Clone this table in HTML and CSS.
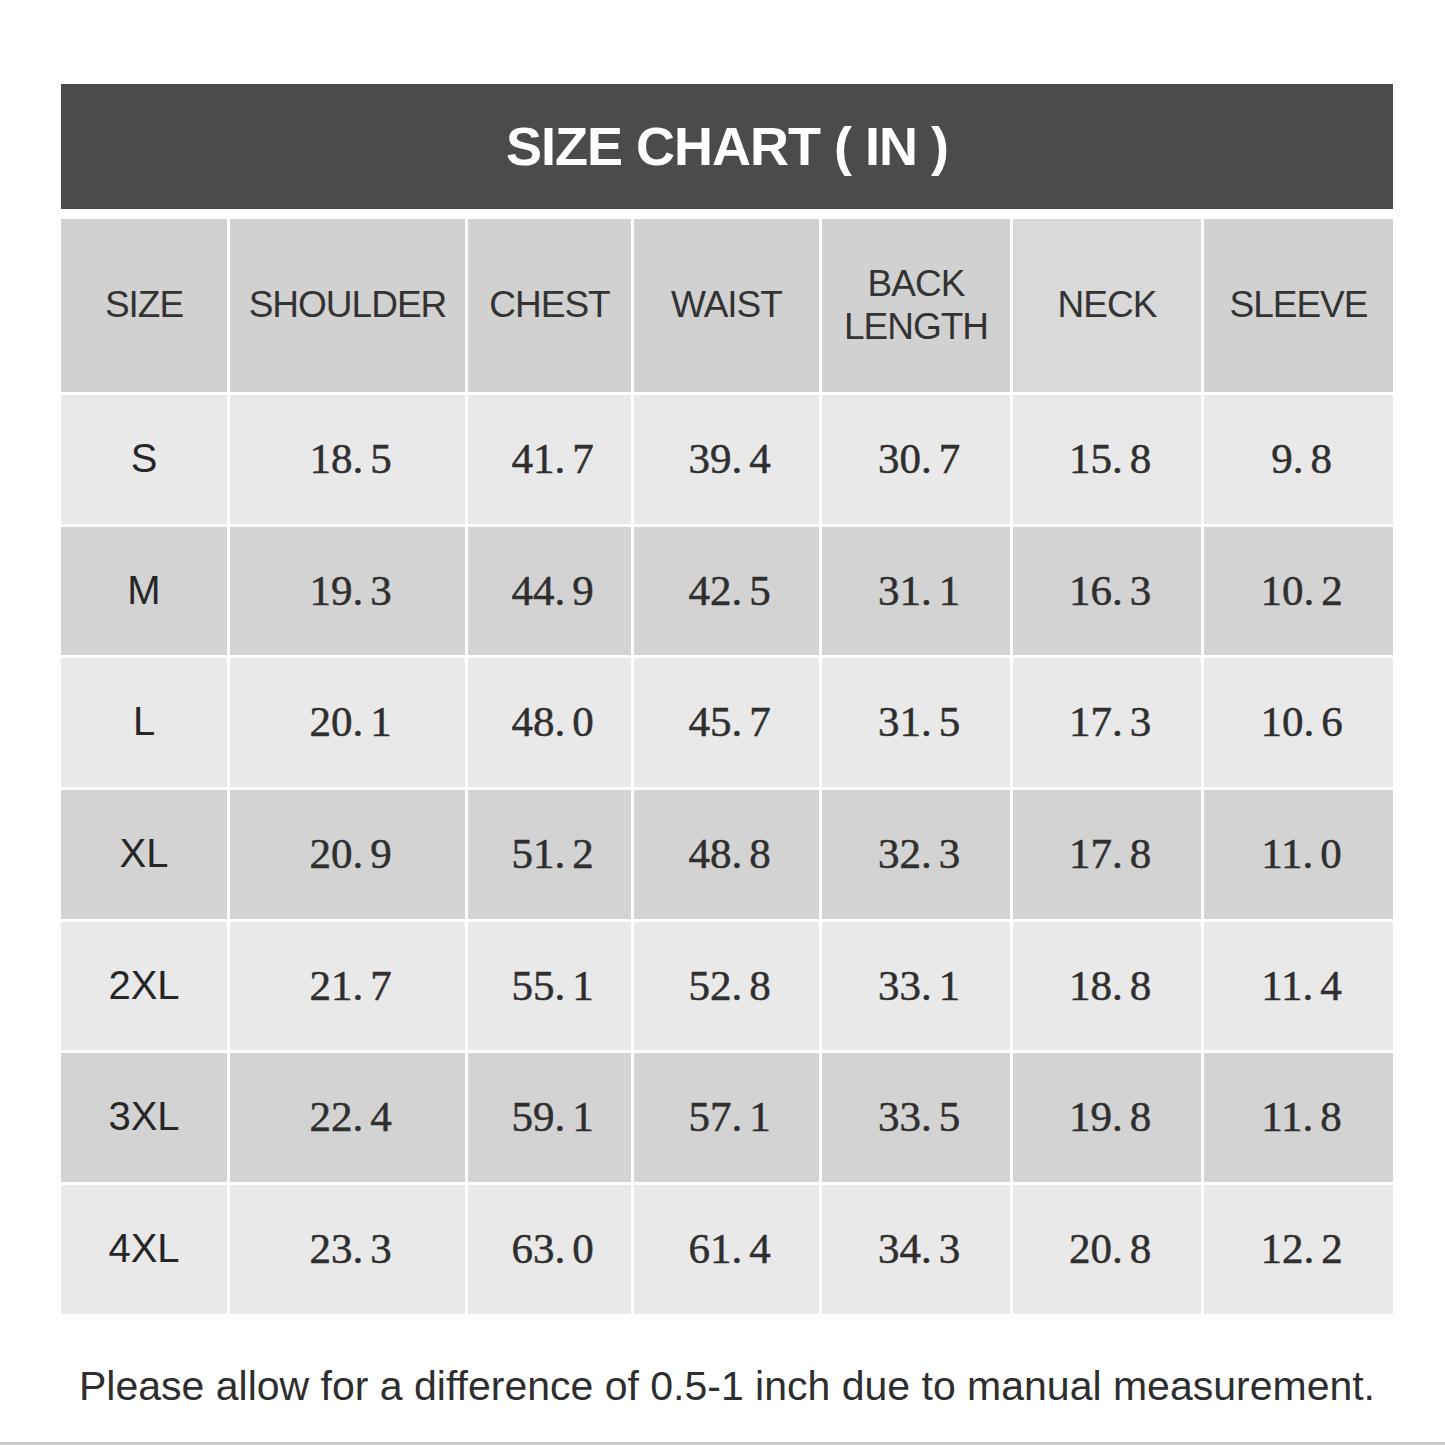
FILE: index.html
```html
<!DOCTYPE html>
<html lang="en">
<head>
<meta charset="utf-8">
<title>Size Chart (IN)</title>
<link rel="stylesheet" href="styles.css">
</head>
<body>
<div class="page">
  <div class="chart">
    <div class="title">SIZE CHART ( IN )</div>
    <div class="grid">
      <div class="cell head">SIZE</div>
      <div class="cell head">SHOULDER</div>
      <div class="cell head">CHEST</div>
      <div class="cell head">WAIST</div>
      <div class="cell head">BACK<br>LENGTH</div>
      <div class="cell head head-light">NECK</div>
      <div class="cell head">SLEEVE</div>

      <div class="cell light size">S</div>
      <div class="cell light num">18<span class="dot">.</span>5</div>
      <div class="cell light num">41<span class="dot">.</span>7</div>
      <div class="cell light num">39<span class="dot">.</span>4</div>
      <div class="cell light num">30<span class="dot">.</span>7</div>
      <div class="cell light num">15<span class="dot">.</span>8</div>
      <div class="cell light num">9<span class="dot">.</span>8</div>

      <div class="cell dark size">M</div>
      <div class="cell dark num">19<span class="dot">.</span>3</div>
      <div class="cell dark num">44<span class="dot">.</span>9</div>
      <div class="cell dark num">42<span class="dot">.</span>5</div>
      <div class="cell dark num">31<span class="dot">.</span>1</div>
      <div class="cell dark num">16<span class="dot">.</span>3</div>
      <div class="cell dark num">10<span class="dot">.</span>2</div>

      <div class="cell light size">L</div>
      <div class="cell light num">20<span class="dot">.</span>1</div>
      <div class="cell light num">48<span class="dot">.</span>0</div>
      <div class="cell light num">45<span class="dot">.</span>7</div>
      <div class="cell light num">31<span class="dot">.</span>5</div>
      <div class="cell light num">17<span class="dot">.</span>3</div>
      <div class="cell light num">10<span class="dot">.</span>6</div>

      <div class="cell dark size">XL</div>
      <div class="cell dark num">20<span class="dot">.</span>9</div>
      <div class="cell dark num">51<span class="dot">.</span>2</div>
      <div class="cell dark num">48<span class="dot">.</span>8</div>
      <div class="cell dark num">32<span class="dot">.</span>3</div>
      <div class="cell dark num">17<span class="dot">.</span>8</div>
      <div class="cell dark num">11<span class="dot">.</span>0</div>

      <div class="cell light size">2XL</div>
      <div class="cell light num">21<span class="dot">.</span>7</div>
      <div class="cell light num">55<span class="dot">.</span>1</div>
      <div class="cell light num">52<span class="dot">.</span>8</div>
      <div class="cell light num">33<span class="dot">.</span>1</div>
      <div class="cell light num">18<span class="dot">.</span>8</div>
      <div class="cell light num">11<span class="dot">.</span>4</div>

      <div class="cell dark size">3XL</div>
      <div class="cell dark num">22<span class="dot">.</span>4</div>
      <div class="cell dark num">59<span class="dot">.</span>1</div>
      <div class="cell dark num">57<span class="dot">.</span>1</div>
      <div class="cell dark num">33<span class="dot">.</span>5</div>
      <div class="cell dark num">19<span class="dot">.</span>8</div>
      <div class="cell dark num">11<span class="dot">.</span>8</div>

      <div class="cell light size">4XL</div>
      <div class="cell light num">23<span class="dot">.</span>3</div>
      <div class="cell light num">63<span class="dot">.</span>0</div>
      <div class="cell light num">61<span class="dot">.</span>4</div>
      <div class="cell light num">34<span class="dot">.</span>3</div>
      <div class="cell light num">20<span class="dot">.</span>8</div>
      <div class="cell light num">12<span class="dot">.</span>2</div>
    </div>
    <p class="note">Please allow for a difference of 0.5-1 inch due to manual measurement.</p>
  </div>
</div>
</body>
</html>
```
FILE: styles.css
```css
html, body {
  margin: 0;
  padding: 0;
  background: #ffffff;
}

.page {
  height: 1442px;
  border-bottom: 3px solid #c9c9c9;
  overflow: hidden;
  font-family: "Liberation Sans", Arial, sans-serif;
}

.chart {
  width: 1332px;
  margin-left: 61px;
  padding-top: 84px;
}

.title {
  height: 125px;
  background: #4b4b4b;
  color: #ffffff;
  font-weight: bold;
  font-size: 54px;
  letter-spacing: -1px;
  display: flex;
  align-items: center;
  justify-content: center;
  padding-bottom: 2px;
  box-sizing: border-box;
}

.grid {
  margin-top: 10px;
  display: grid;
  grid-template-columns: 166px 235px 163px 185px 188px 188px 189px;
  grid-template-rows: 173px repeat(7, 128.7px);
  gap: 3px;
}

.cell {
  display: flex;
  align-items: center;
  justify-content: center;
  text-align: center;
}

.head {
  background: #d1d1d1;
  color: #333333;
  font-size: 37px;
  letter-spacing: -1px;
  line-height: 1.15;
}

.head-light {
  background: #d9d9d9;
}

.light {
  background: #e9e9e9;
}

.dark {
  background: #d3d3d3;
}

.size {
  color: #262626;
  font-size: 40px;
  padding-bottom: 2px;
}

.num {
  color: #2f2f2f;
  font-family: "Liberation Serif", "Times New Roman", serif;
  font-size: 43px;
  -webkit-text-stroke: 0.5px #2f2f2f;
  padding-left: 6px;
  padding-bottom: 2px;
}

.dot {
  letter-spacing: 7px;
}

.note {
  margin: 49px 0 0;
  font-size: 41px;
  line-height: 47px;
  color: #2e2e2e;
  text-align: center;
  white-space: nowrap;
}
```
